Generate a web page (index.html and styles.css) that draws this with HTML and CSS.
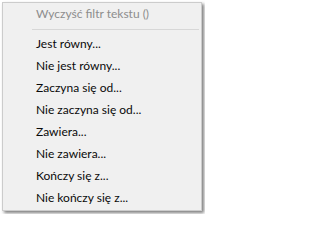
FILE: index.html
```html
<!DOCTYPE html>
<html lang="pl">
<head>
<meta charset="utf-8">
<title>Menu filtra</title>
<link rel="stylesheet" href="styles.css">
</head>
<body>
<div class="menu">
  <div class="item disabled">Wyczyść filtr tekstu ()</div>
  <div class="sep"></div>
  <div class="item">Jest równy...</div>
  <div class="item">Nie jest równy...</div>
  <div class="item">Zaczyna się od...</div>
  <div class="item">Nie zaczyna się od...</div>
  <div class="item">Zawiera...</div>
  <div class="item">Nie zawiera...</div>
  <div class="item">Kończy się z...</div>
  <div class="item">Nie kończy się z...</div>
</div>
</body>
</html>
```

FILE: styles.css
```css
html, body {
  margin: 0;
  padding: 0;
  background: #ffffff;
}
body {
  width: 205px;
  height: 214px;
  overflow: hidden;
  font-family: Lato, "Open Sans", sans-serif;
  font-size: 12px;
}
.menu {
  margin: 2px 0 0 2px;
  width: 198px;
  border: 1px solid #cccccc;
  background: #f0f0f0;
  padding-bottom: 1px;
  box-shadow: 2px 2px 3px rgba(0, 0, 0, 0.5);
}
.item {
  height: 22px;
  line-height: 22px;
  padding-left: 33px;
  color: #0a0a0a;
  white-space: nowrap;
}
.item.disabled {
  color: #8d8d8d;
}
.sep {
  height: 1px;
  margin: 4px 2px 3px 29px;
  background: #d7d7d7;
}
```
